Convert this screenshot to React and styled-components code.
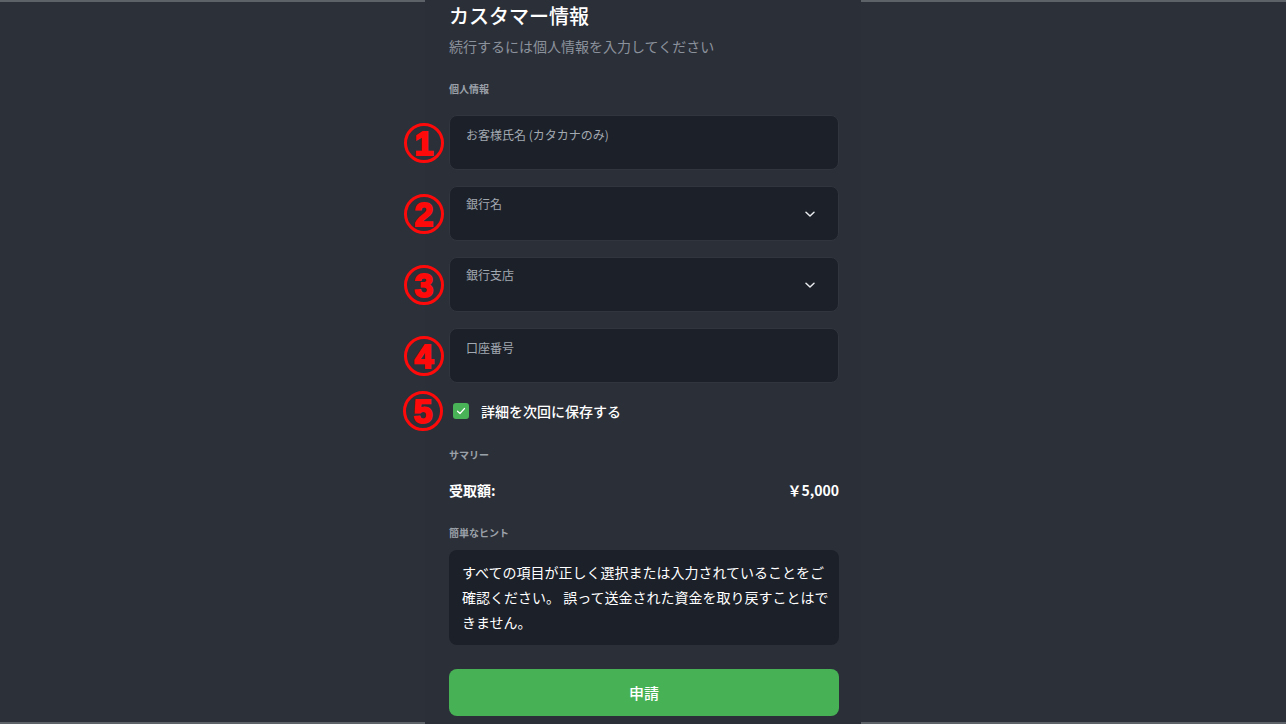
import React from 'react';
import styled, { createGlobalStyle } from 'styled-components';

const GlobalStyle = createGlobalStyle`
  html, body {
    margin: 0;
    padding: 0;
    background: #2c3039;
  }
  body {
    font-family: "Noto Sans CJK JP", "Noto Sans", sans-serif;
    color: #ffffff;
  }
`;

const Page = styled.div`
  display: flex;
  width: 1286px;
  height: 724px;
  overflow: hidden;
`;

const Side = styled.div`
  flex: 1;
  background: #2c3039;
  border-top: 2px solid #5d6168;
  border-bottom: 2px solid #5d6168;
`;

const Column = styled.div`
  width: 436px;
  box-sizing: border-box;
  padding: 0 22px 0 24px;
  background: #2b2f38;
  display: flex;
  flex-direction: column;
`;

const Title = styled.h1`
  margin: 0;
  font-size: 20px;
  line-height: 31px;
  font-weight: 500;
  color: #ffffff;
`;

const Subtitle = styled.p`
  margin: 5px 0 0;
  font-size: 14px;
  line-height: 20px;
  color: #8b929c;
`;

const SectionLabel = styled.div`
  margin-top: ${p => p.$mt}px;
  font-size: 10px;
  line-height: 16px;
  font-weight: 700;
  color: #9ba1a9;
`;

const Fields = styled.div`
  margin-top: 18px;
  display: flex;
  flex-direction: column;
  gap: 16px;
`;

const FieldBox = styled.div`
  position: relative;
  height: 55px;
  box-sizing: border-box;
  padding: ${p => (p.$select ? 9 : 11)}px 22px 0 16px;
  background: #1b2029;
  border: 1px solid #30353e;
  border-radius: 8px;
  display: flex;
  align-items: flex-start;
  justify-content: space-between;
`;

const FieldLabel = styled.span`
  font-size: 12px;
  line-height: 16px;
  color: #a3a9b1;
`;

const Chevron = styled.svg`
  align-self: center;
  margin-top: -9px;
  width: 12px;
  height: 12px;
`;

const Marker = styled.span`
  position: absolute;
  left: -46px;
  top: 50%;
  transform: translateY(-50%);
  width: 40px;
  height: 40px;
  box-sizing: border-box;
  border: 3px solid #ff0a0a;
  border-radius: 50%;
  display: flex;
  align-items: center;
  justify-content: center;
  color: #ff0a0a;
  font-family: "Liberation Sans", Arial, sans-serif;
  font-weight: 900;
  font-size: 34px;
  line-height: 1;
  -webkit-text-stroke: 1.8px #ff0a0a;
`;

const CheckRow = styled.label`
  position: relative;
  margin-top: 18px;
  height: 20px;
  display: flex;
  align-items: center;
  gap: 12px;
  padding-left: 4px;
  font-size: 14px;
  font-weight: 500;
  color: #ffffff;
`;

const CheckBox = styled.span`
  width: 16px;
  height: 16px;
  border-radius: 3px;
  background: #48b357;
  display: flex;
  align-items: center;
  justify-content: center;
`;

const SummaryRow = styled.div`
  margin-top: 17px;
  display: flex;
  justify-content: space-between;
  font-size: 14px;
  line-height: 20px;
  font-weight: 600;
  color: #ffffff;
`;

const HintBox = styled.div`
  margin-top: 9px;
  padding: 10px 13px;
  background: #1b2029;
  border-radius: 8px;
  font-size: 14px;
  line-height: 25px;
  color: #ffffff;
  white-space: nowrap;
`;

const SubmitButton = styled.button`
  margin-top: 24px;
  height: 47px;
  border: none;
  border-radius: 8px;
  background: #47b255;
  color: #ffffff;
  font-family: inherit;
  font-size: 15px;
  font-weight: 500;
  cursor: pointer;
`;

const fields = [
  { label: 'お客様氏名 (カタカナのみ)', n: '1' },
  { label: '銀行名', n: '2', select: true },
  { label: '銀行支店', n: '3', select: true },
  { label: '口座番号', n: '4' },
];

function ChevronDown() {
  return (
    <Chevron viewBox="0 0 12 12" fill="none">
      <path d="M2 4.2 L6 8 L10 4.2" stroke="#e8eaed" strokeWidth="1.5" strokeLinecap="round" strokeLinejoin="round" />
    </Chevron>
  );
}

export default function App() {
  return (
    <>
      <GlobalStyle />
      <Page>
        <Side />
        <Column>
          <Title>カスタマー情報</Title>
          <Subtitle>続行するには個人情報を入力してください</Subtitle>
          <SectionLabel $mt={25}>個人情報</SectionLabel>
          <Fields>
            {fields.map(f => (
              <FieldBox key={f.n} $select={f.select}>
                <Marker>{f.n}</Marker>
                <FieldLabel>{f.label}</FieldLabel>
                {f.select && <ChevronDown />}
              </FieldBox>
            ))}
          </Fields>
          <CheckRow>
            <Marker>5</Marker>
            <CheckBox>
              <svg width="10" height="10" viewBox="0 0 10 10" fill="none">
                <path d="M1.5 5.2 L4 7.5 L8.5 2.5" stroke="#ffffff" strokeWidth="1.2" strokeLinecap="round" strokeLinejoin="round" />
              </svg>
            </CheckBox>
            詳細を次回に保存する
          </CheckRow>
          <SectionLabel $mt={26}>サマリー</SectionLabel>
          <SummaryRow>
            <span>受取額:</span>
            <span>￥5,000</span>
          </SummaryRow>
          <SectionLabel $mt={25}>簡単なヒント</SectionLabel>
          <HintBox>
            すべての項目が正しく選択または入力されていることをご
            <br />
            確認ください。 誤って送金された資金を取り戻すことはで
            <br />
            きません。
          </HintBox>
          <SubmitButton>申請</SubmitButton>
        </Column>
        <Side />
      </Page>
    </>
  );
}
